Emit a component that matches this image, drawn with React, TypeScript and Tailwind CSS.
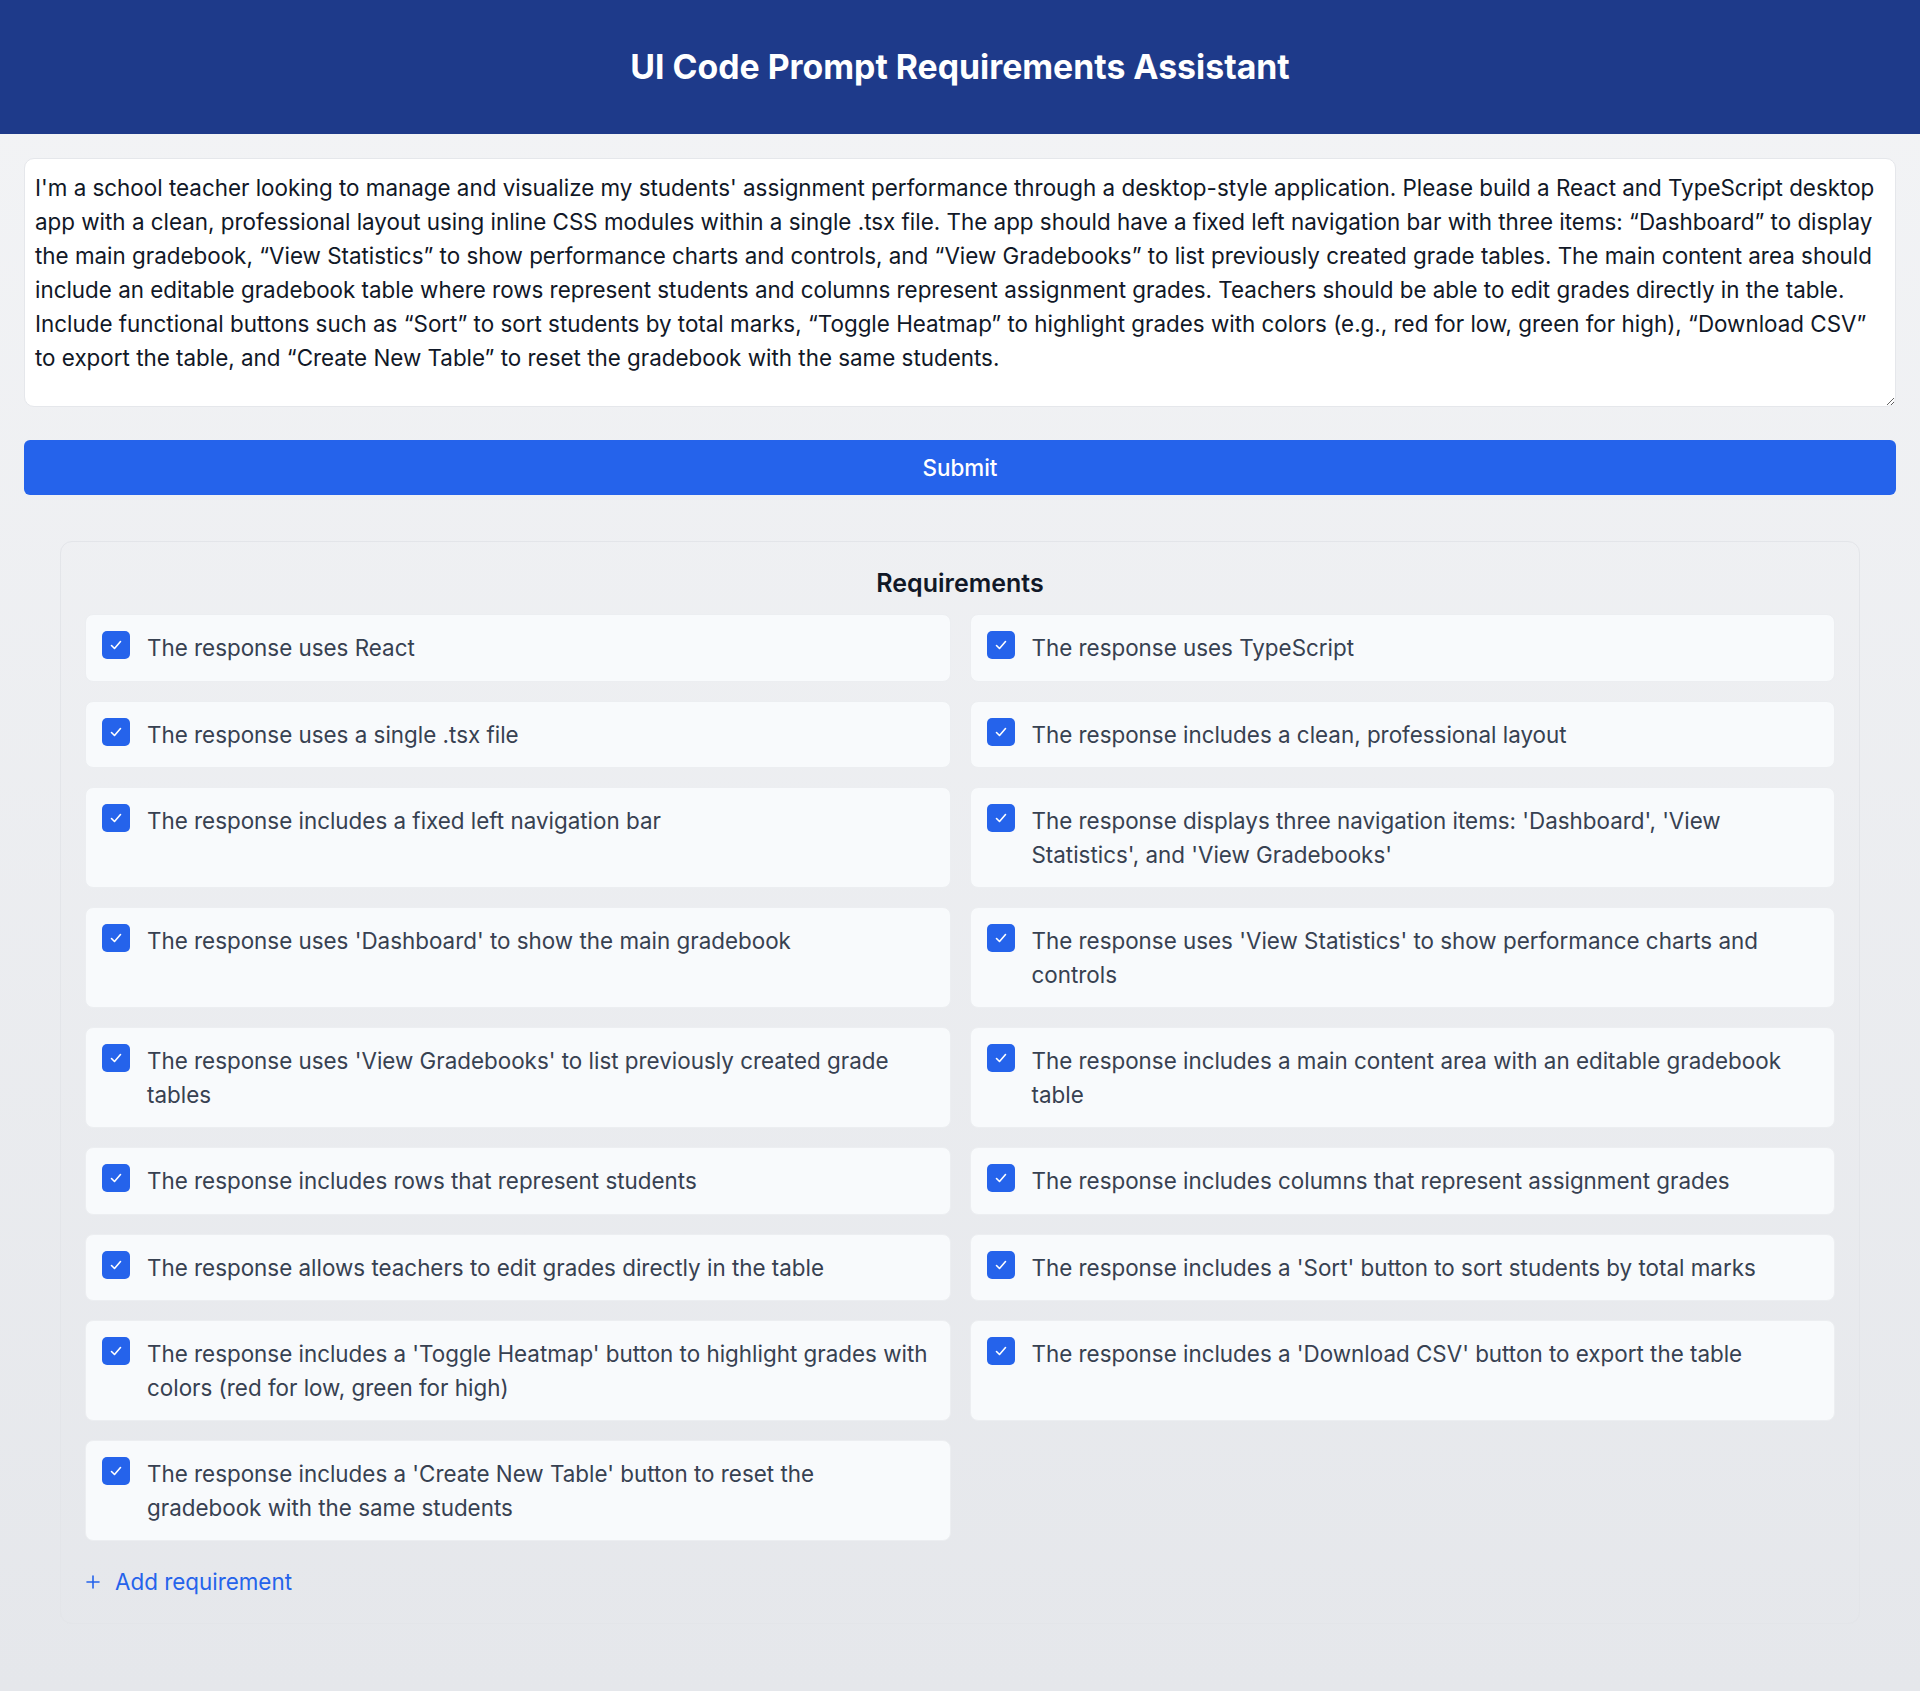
import React from "react";

const PROMPT =
  "I'm a school teacher looking to manage and visualize my students' assignment performance through a desktop-style application. Please build a React and TypeScript desktop app with a clean, professional layout using inline CSS modules within a single .tsx file. The app should have a fixed left navigation bar with three items: \u201cDashboard\u201d to display the main gradebook, \u201cView Statistics\u201d to show performance charts and controls, and \u201cView Gradebooks\u201d to list previously created grade tables. The main content area should include an editable gradebook table where rows represent students and columns represent assignment grades. Teachers should be able to edit grades directly in the table. Include functional buttons such as \u201cSort\u201d to sort students by total marks, \u201cToggle Heatmap\u201d to highlight grades with colors (e.g., red for low, green for high), \u201cDownload CSV\u201d to export the table, and \u201cCreate New Table\u201d to reset the gradebook with the same students.";

const REQS = [
  "The response uses React",
  "The response uses TypeScript",
  "The response uses a single .tsx file",
  "The response includes a clean, professional layout",
  "The response includes a fixed left navigation bar",
  "The response displays three navigation items: 'Dashboard', 'View Statistics', and 'View Gradebooks'",
  "The response uses 'Dashboard' to show the main gradebook",
  "The response uses 'View Statistics' to show performance charts and controls",
  "The response uses 'View Gradebooks' to list previously created grade tables",
  "The response includes a main content area with an editable gradebook table",
  "The response includes rows that represent students",
  "The response includes columns that represent assignment grades",
  "The response allows teachers to edit grades directly in the table",
  "The response includes a 'Sort' button to sort students by total marks",
  "The response includes a 'Toggle Heatmap' button to highlight grades with colors (red for low, green for high)",
  "The response includes a 'Download CSV' button to export the table",
  "The response includes a 'Create New Table' button to reset the gradebook with the same students",
];

function Check() {
  return (
    <div className="flex h-[28px] w-[28px] shrink-0 items-center justify-center rounded-[5px] bg-[#2563eb]">
      <svg width="14" height="14" viewBox="0 0 14 14" fill="none">
        <polyline
          points="2.5,7.5 5.5,10.5 11.5,3.5"
          stroke="white"
          strokeWidth="1.6"
          strokeLinecap="round"
          strokeLinejoin="round"
        />
      </svg>
    </div>
  );
}

export default function App() {
  return (
    <div
      className="min-h-screen bg-gradient-to-b from-[#f3f4f6] to-[#e5e7eb]"
      style={{ fontFamily: "Inter, 'Noto Sans', sans-serif" }}
    >
      <header className="flex h-[134px] items-center justify-center bg-[#1e3a8a]">
        <h1 className="text-[33.8px] font-bold leading-[44px] text-white">
          UI Code Prompt Requirements Assistant
        </h1>
      </header>
      <main className="px-6 pt-6 pb-16">
        <textarea
          className="block h-[249px] w-full rounded-[10px] border border-[#e5e7eb] bg-white px-[10px] py-[12px] text-[22.4px] leading-[34px] text-[#111827] outline-none"
          defaultValue={PROMPT}
        />
        <button className="mt-[33px] flex h-[55px] w-full items-center justify-center rounded-[6px] bg-[#2563eb] text-[22.4px] font-medium text-white">
          Submit
        </button>
        <section className="mx-auto mt-[46px] max-w-[1800px] rounded-[12px] border border-[#e3e5e9] px-6 pt-[25px] pb-6">
          <h2 className="mb-[14px] text-center text-[25px] font-semibold leading-[33px] text-[#111827]">
            Requirements
          </h2>
          <div className="grid grid-cols-2 gap-x-[19px] gap-y-[19px]">
            {REQS.map((r, i) => (
              <div
                key={i}
                className="flex items-start gap-[17px] rounded-[8px] border border-[#eceef1] bg-[#f8fafc] px-4 py-[16px]"
              >
                <Check />
                <span className="text-[22.4px] leading-[33.5px] text-[#374151]">{r}</span>
              </div>
            ))}
          </div>
          <button className="mt-6 flex items-center gap-[14px] text-[22.4px] leading-[34px] text-[#2563eb]">
            <svg width="16" height="16" viewBox="0 0 16 16" fill="none">
              <path d="M8 2v12M2 8h12" stroke="#2563eb" strokeWidth="1.6" strokeLinecap="round" />
            </svg>
            Add requirement
          </button>
        </section>
      </main>
    </div>
  );
}
